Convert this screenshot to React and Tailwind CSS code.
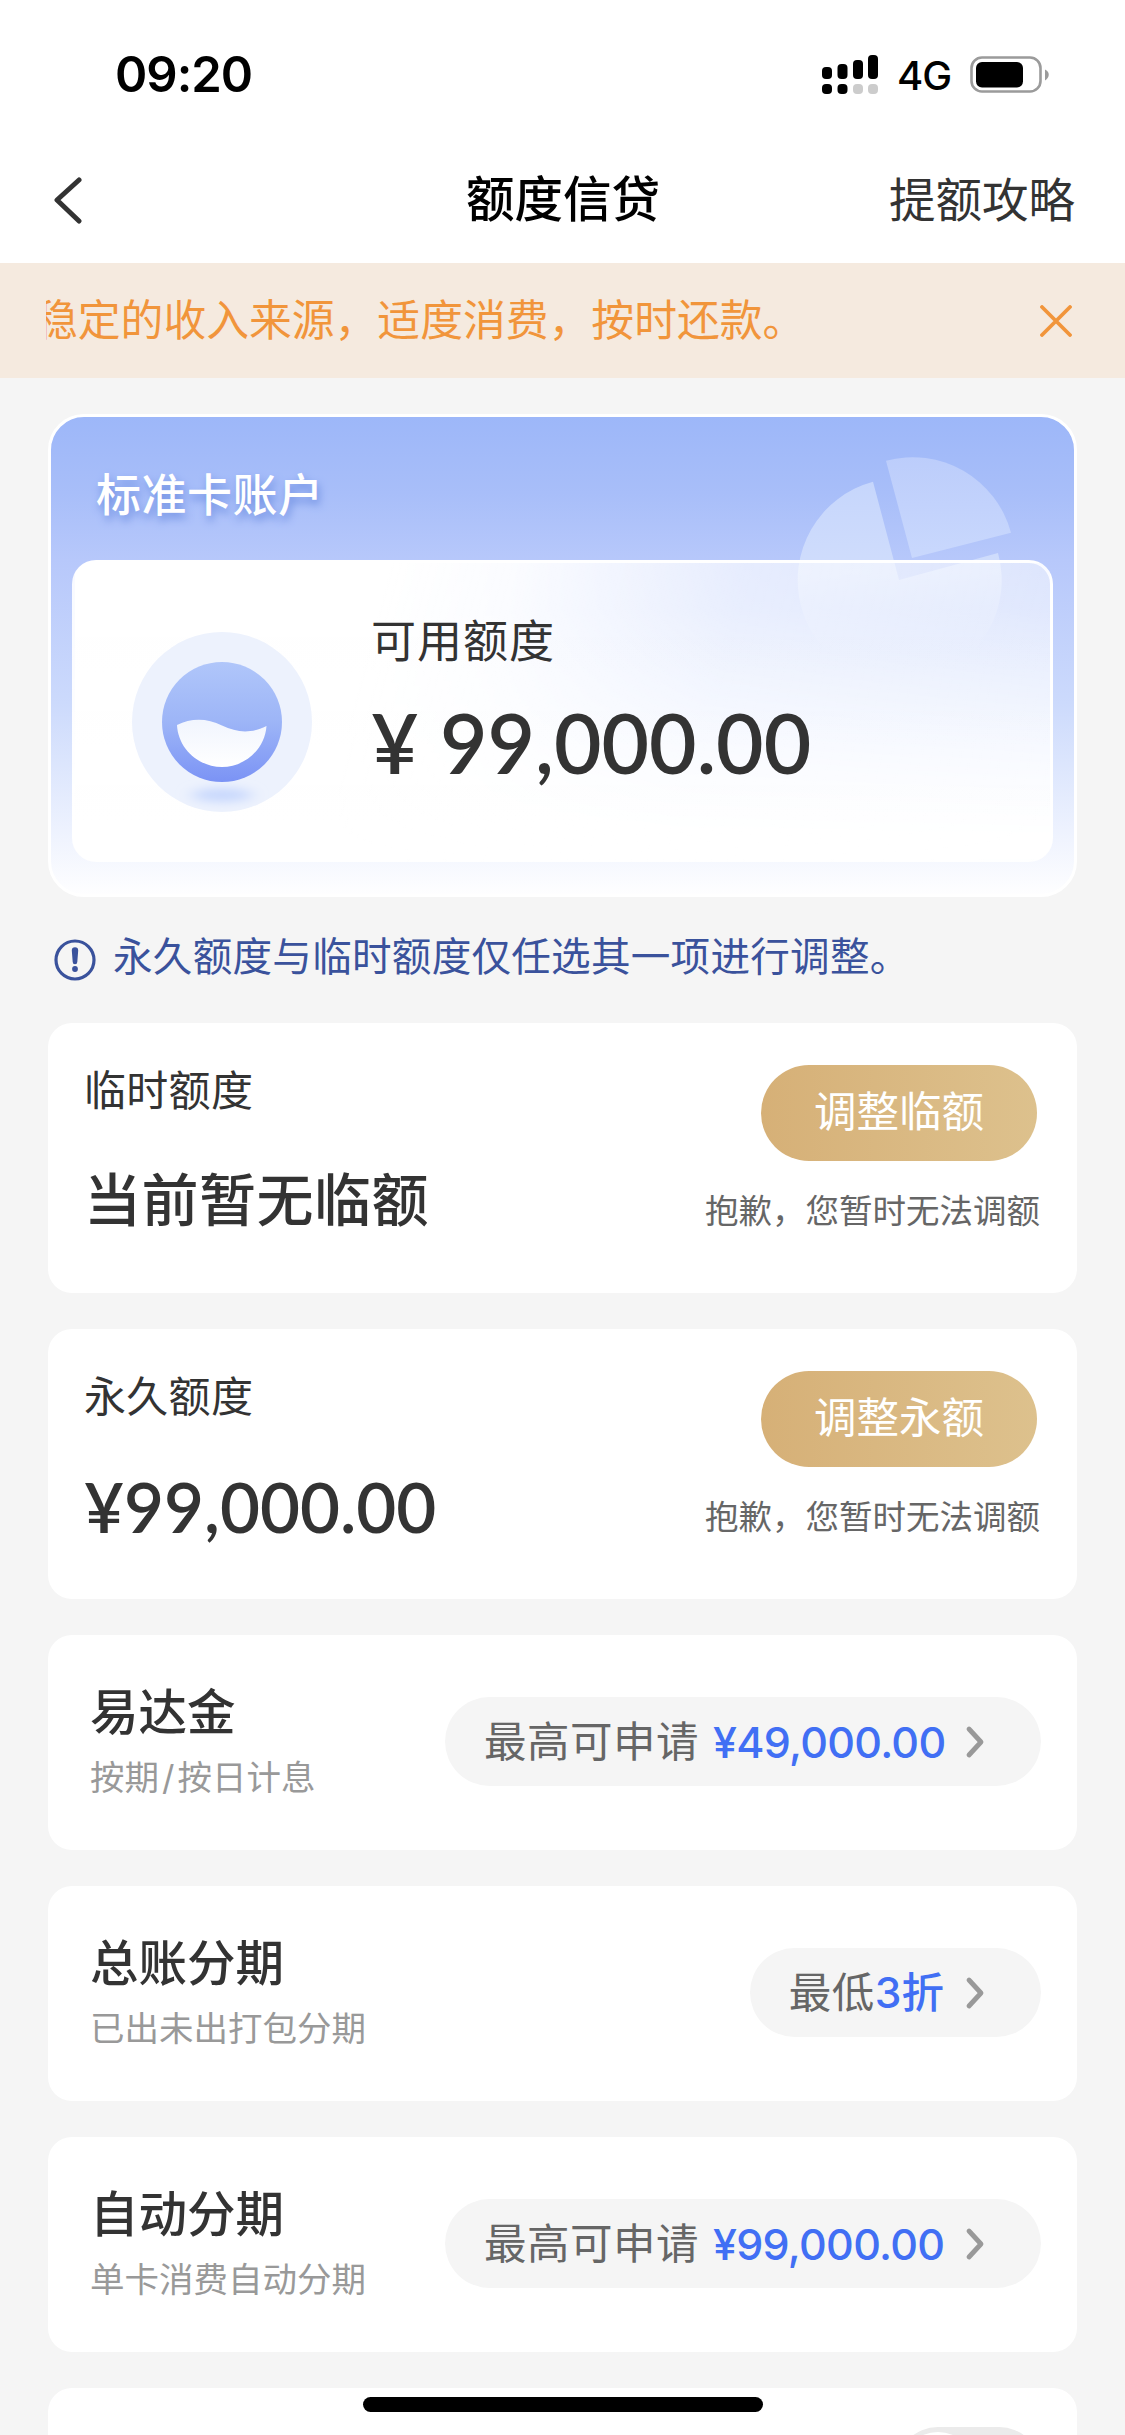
const offers = [
  { title: "易达金", note: "按期/按日计息", lead: "最高可申请", value: "¥49,000.00", gap: true },
  { title: "总账分期", note: "已出未出打包分期", lead: "最低", value: "3折", gap: false },
  { title: "自动分期", note: "单卡消费自动分期", lead: "最高可申请", value: "¥99,000.00", gap: true },
];

function StatusBar() {
  return (
    <div className="flex h-[138px] items-center pt-3 pl-[115px] pr-[75px] text-black">
      <div className="text-[49px] leading-[60px] font-semibold tracking-[-1px]">09:20</div>
      <svg className="mb-[2px] ml-auto h-[42px] w-[57px]" viewBox="0 0 57 42" fill="#000">
        <rect x="0" y="14" width="10" height="12" rx="4" />
        <rect x="15.500" y="11" width="10" height="15" rx="4" />
        <rect x="31" y="7" width="10" height="19" rx="4" />
        <rect x="46" y="2" width="10" height="24" rx="4" />
        <rect x="0" y="31" width="10" height="10" rx="4" />
        <rect x="15.500" y="31" width="10" height="10" rx="4" />
        <rect x="31" y="31" width="10" height="10" rx="4" fill="#ccc" />
        <rect x="46" y="31" width="10" height="10" rx="4" fill="#ccc" />
      </svg>
      <div className="mt-[2px] ml-[18px] w-[73px] text-[40px] leading-[50px] font-medium tracking-[-1px]">4G</div>
      <svg className="h-[38px] w-[80px]" viewBox="0 0 80 38">
        <rect x="1.500" y="1.500" width="69" height="34" rx="10.500" fill="none" stroke="#9b9b9b" strokeWidth="2.600" />
        <rect x="6" y="6" width="47" height="25.500" rx="6" fill="#000" />
        <path d="M75 13.500c5 2 5 8 0 11z" fill="#9b9b9b" />
      </svg>
    </div>
  );
}

function NavBar() {
  return (
    <div className="grid h-[125px] grid-cols-3 items-center pr-[50px] pb-[2px] pl-[53px]">
      <svg className="h-[48px] w-[30px]" viewBox="0 0 30 48" fill="none" stroke="#333" strokeWidth="5" strokeLinecap="round" strokeLinejoin="round">
        <path d="M26 4L4 24L26 45" />
      </svg>
      <h1 className="pr-[2px] text-center text-[48.500px] leading-[60px] font-medium text-black">额度信贷</h1>
      <div className="text-right text-[46.500px] leading-[60px] text-[#333]">提额攻略</div>
    </div>
  );
}

function Notice() {
  return (
    <div className="flex h-[115px] items-center justify-between bg-[#f5eadf] pr-[53px] pl-[46px] text-[#f1953b]">
      <div className="overflow-hidden">
        <p className="-ml-[11px] text-[42.800px] leading-[60px] whitespace-nowrap">稳定的收入来源，适度消费，按时还款。</p>
      </div>
      <svg className="h-[32px] w-[32px]" viewBox="0 0 32 32" fill="none" stroke="currentColor" strokeWidth="3.800" strokeLinecap="round">
        <path d="M2 2L30 30M30 2L2 30" />
      </svg>
    </div>
  );
}

function WaveIcon() {
  return (
    <svg className="h-[180px] w-[180px] shrink-0" viewBox="0 0 180 180">
      <defs>
        <linearGradient id="orb" x1="0" y1="0" x2="0" y2="1">
          <stop offset="0" stopColor="#b0c6fa" />
          <stop offset="0.500" stopColor="#9db5f7" />
          <stop offset="1" stopColor="#7b93f5" />
        </linearGradient>
        <linearGradient id="wave" x1="0" y1="0" x2="0" y2="1">
          <stop offset="0" stopColor="#f1f5fe" />
          <stop offset="1" stopColor="#ffffff" />
        </linearGradient>
        <clipPath id="halo"><circle cx="90" cy="90" r="90" /></clipPath>
        <filter id="soft" x="-50%" y="-300%" width="200%" height="700%"><feGaussianBlur stdDeviation="8 5" /></filter>
      </defs>
      <circle cx="90" cy="90" r="90" fill="#edf2fd" />
      <g clipPath="url(#halo)">
        <ellipse cx="90" cy="163" rx="30" ry="7" fill="#c8d8fd" filter="url(#soft)" />
      </g>
      <circle cx="90" cy="90" r="60" fill="url(#orb)" />
      <path d="M45 93C59 86 75 86 90 93.500C105 100.500 118 102 134.500 94C133 117 113 135 90 135C66 135 46 116 45 93Z" fill="url(#wave)" />
    </svg>
  );
}

function PieArt() {
  return (
    <svg className="absolute top-[40px] right-[60px] h-[230px] w-[220px]" viewBox="0 0 220 230">
      <defs>
        <linearGradient id="pie" x1="0" y1="0" x2="0" y2="1">
          <stop offset="0" stopColor="#c6d6fc" />
          <stop offset="0.450" stopColor="#d0ddfc" />
          <stop offset="0.850" stopColor="#d4dffc" stopOpacity="0" />
        </linearGradient>
        <linearGradient id="slice" x1="0" y1="0" x2="0" y2="1">
          <stop offset="0" stopColor="#bccdfb" />
          <stop offset="1" stopColor="#c9d8fd" />
        </linearGradient>
      </defs>
      <path d="M105 123L79 24.700A102 102 0 1 0 204 96Z" fill="url(#pie)" />
      <path d="M118 101L92 3.700A102 102 0 0 1 217 75.700Z" fill="url(#slice)" />
    </svg>
  );
}

function AccountCard() {
  return (
    <section className="relative h-[483px] rounded-[36px] border-[3px] border-white bg-[linear-gradient(to_bottom,#9db7f9_0%,#a8bef9_16%,#b7c8fb_30%,#ccdafc_60%,#fefeff_100%)] px-[21px] pt-[49px]">
      <PieArt />
      <h2 className="pl-[24px] text-[45px] leading-[60px] font-medium tracking-[0.5px] text-white [text-shadow:2px_5px_8px_#6b8ce0]">标准卡账户</h2>
      <div className="relative mt-[34px] flex h-[302px] items-center rounded-[24px] border-[3px] border-white/80 bg-[linear-gradient(to_top,#ffffff_0%,#ffffff00_85%),linear-gradient(105deg,#ffffff_30%,#ffffffee_42%,#ffffffa6_64%,#ffffff80_100%)] pt-[22px] pl-[57px]">
        <WaveIcon />
        <div className="-mt-[41px] ml-[59px] text-[#333]">
          <div className="text-[45px] leading-[60px] tracking-[1px]">可用额度</div>
          <div className="mt-[20px] font-[Lato] text-[82px] leading-[100px] font-semibold [word-spacing:1px]">¥ 99,000.00</div>
        </div>
      </div>
    </section>
  );
}

function Hint() {
  return (
    <div className="flex h-[126px] items-center pb-[7px] pl-[6px] text-[#3a529c]">
      <svg className="mt-[6px] h-[42px] w-[42px]" viewBox="0 0 42 42">
        <circle cx="21" cy="21" r="19" fill="none" stroke="currentColor" strokeWidth="3.200" />
        <path d="M17.800 11.500a3.200 3.200 0 0 1 6.400 0L23.300 23a2.300 2.300 0 0 1-4.600 0z" fill="currentColor" />
        <circle cx="21" cy="30" r="2.900" fill="currentColor" />
      </svg>
      <p className="ml-[17px] text-[39.600px] leading-[50px] tracking-[0.250px]">永久额度与临时额度仅任选其一项进行调整。</p>
    </div>
  );
}

function LimitCard({ label, action, children }) {
  return (
    <section className="flex h-[270px] justify-between rounded-[24px] bg-white pr-[37px] pl-[36px]">
      <div className="pt-[38px] text-[#333]">
        <div className="text-[42px] leading-[60px] tracking-[0.300px]">{label}</div>
        {children}
      </div>
      <div className="flex flex-col items-end pt-[42px]">
        <button className="mr-[3px] h-[96px] w-[276px] rounded-full bg-linear-to-r from-[#d6b077] to-[#ddc18d] pb-[2px] text-[42.500px] leading-[60px] text-white">{action}</button>
        <p className="mt-[26px] text-[33.500px] leading-[48px] text-[#666]">抱歉，您暂时无法调额</p>
      </div>
    </section>
  );
}

function OfferCard({ title, note, lead, value, gap }) {
  return (
    <section className="flex h-[215px] justify-between rounded-[24px] bg-white pr-[36px] pl-[42px]">
      <div className="pt-[48px]">
        <h3 className="text-[48.500px] leading-[60px] font-medium text-[#333]">{title}</h3>
        <p className="mt-[10px] text-[34.500px] leading-[50px] text-[#999]">
          {note.split("/").map((part, i) => (
            <span key={part}>
              {i > 0 && <span className="px-[3px]">/</span>}
              {part}
            </span>
          ))}
        </p>
      </div>
      <div className="mt-[62px] flex h-[89px] items-center rounded-full bg-[#f5f5f5] pr-[56px] pl-[39px] text-[42.500px] leading-[60px] text-[#666]">
        <span className="tracking-[0.500px]">{lead}</span>
        <span className={gap ? "ml-[14px] w-[231px] text-[43px] font-medium tracking-[-0.700px] whitespace-nowrap text-[#416ff4]" : "font-medium text-[#416ff4]"}>{value}</span>
        <svg className="ml-[21px] h-[34px] w-[20px]" viewBox="0 0 20 34" fill="none" stroke="#999" strokeWidth="4.800" strokeLinecap="round" strokeLinejoin="round">
          <path d="M4 4L16 17L4 30" />
        </svg>
      </div>
    </section>
  );
}

export default function App() {
  return (
    <div className="relative h-[2435px] w-[1125px] overflow-hidden bg-[#f5f5f5] font-['Inter','Noto_Sans_CJK_SC',sans-serif]">
      <header className="bg-white">
        <StatusBar />
        <NavBar />
      </header>
      <Notice />
      <main className="px-[48px] pt-[36px]">
        <AccountCard />
        <Hint />
        <div className="flex flex-col gap-[36px]">
          <LimitCard label="临时额度" action="调整临额">
            <div className="mt-[45px] text-[57px] leading-[70px] font-medium tracking-[0.500px]">当前暂无临额</div>
          </LimitCard>
          <LimitCard label="永久额度" action="调整永额">
            <div className="mt-[45px] font-[Lato] text-[69px] leading-[70px] font-semibold">¥99,000.00</div>
          </LimitCard>
          {offers.map((o) => (
            <OfferCard key={o.title} {...o} />
          ))}
          <section className="flex h-[215px] justify-end rounded-[24px] bg-white pt-[39px] pr-[36px]">
            <div className="h-[84px] w-[145px] rounded-full bg-[#ebebeb] p-[5px]">
              <div className="h-[74px] w-[74px] rounded-full bg-white" />
            </div>
          </section>
        </div>
      </main>
      <div className="absolute top-[2397px] left-[363px] h-[15px] w-[400px] rounded-full bg-black" />
    </div>
  );
}
